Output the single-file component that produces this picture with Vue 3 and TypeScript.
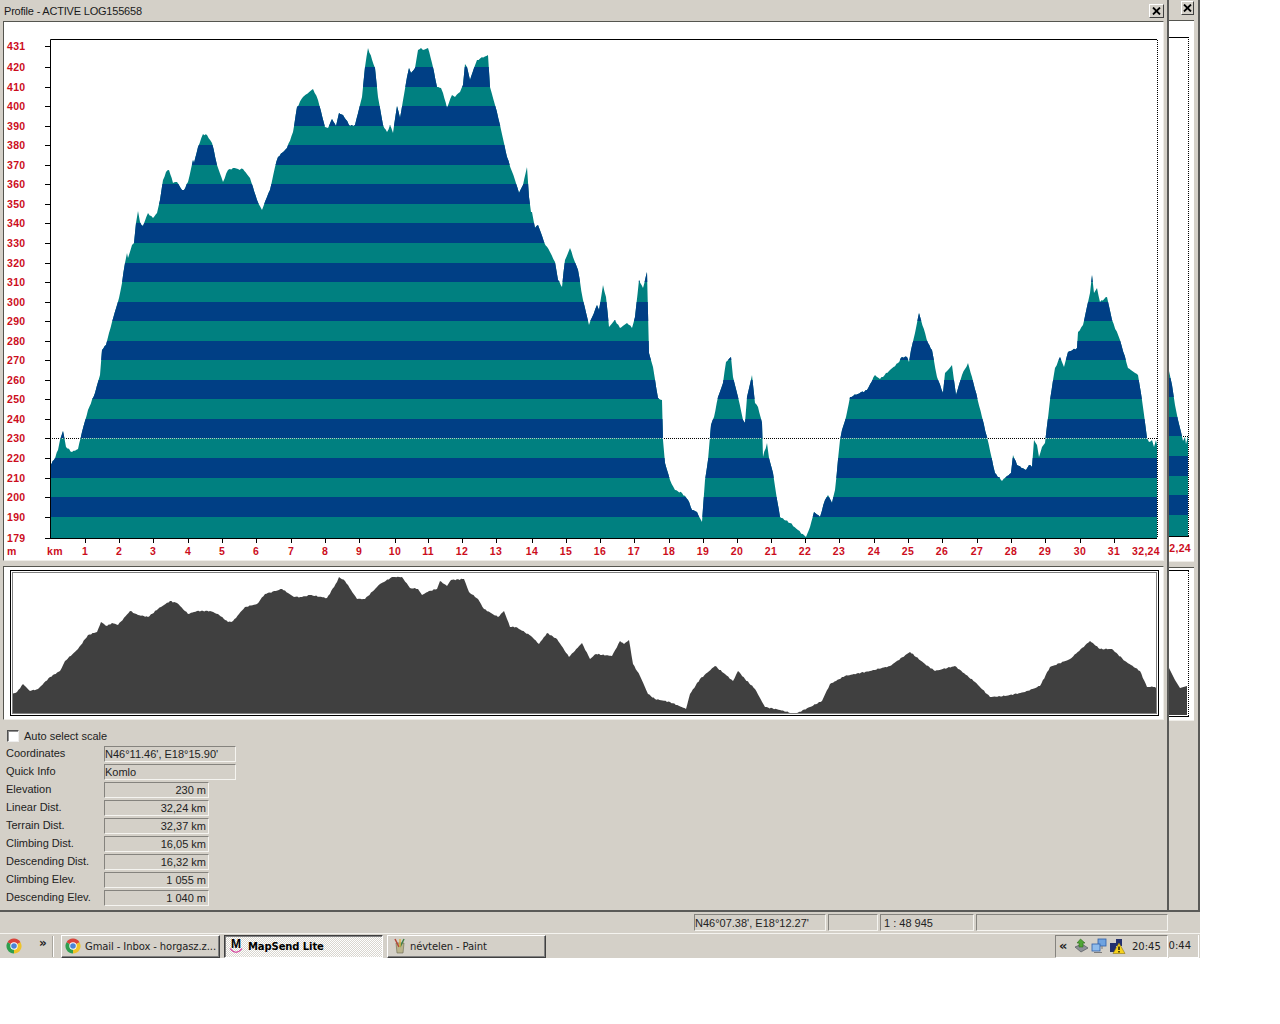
<script setup lang="ts">
type Pt = [number, number]

// traced by hand from the profile, x/y are page pixels
const mainTrace: Pt[] = [
  [50,465],[54,460],[58,450],[60,440],[63,431],[66,447],[72,452],[78,449],[82,432],[88,410],[95,393],[100,375],[102,350],[106,345],[112,322],[119,298],
  [122,283],[125,263],[127,253],[128,258],[132,245],[134,243],[136,223],[138,211],[140,222],[143,226],[148,213],[153,218],[157,213],[160,200],[163,180],[166,172],[169,170],[173,183],[177,182],[182,190],[184,190],[188,182],[193,160],[194,163],[198,147],[203,134],[207,135],[212,143],[217,165],[223,182],[228,170],[233,168],[238,169],[243,169],[250,178],[257,200],[262,210],[267,197],[270,190],[275,167],[278,157],[287,148],[293,132],[297,107],[303,97],[313,89],[318,100],[325,127],[328,128],[332,119],[336,126],[339,113],[343,115],[350,126],[355,125],[362,97],[365,67],[368,48],[375,68],[378,97],[383,125],[387,132],[390,125],[393,133],[397,106],
  [400,118],[407,77],[409,68],[411,73],[415,68],[418,50],[421,48],[423,50],[428,48],[432,63],[437,87],[441,88],[443,93],[447,108],[452,95],[455,97],[460,92],[463,85],[465,64],[467,67],[470,80],[474,68],[477,60],[488,55],[490,87],[495,105],[500,125],[507,157],[515,180],[519,193],[523,185],[527,167],[529,197],[531,212],[532,212],[535,228],[538,225],[541,233],[544,242],[550,252],[555,262],[558,280],[562,287],[565,260],[570,248],[573,257],[578,270],[583,300],[589,325],[597,305],[599,310],[603,285],[606,297],[609,327],[615,320],[620,328],[627,323],[632,328],[635,317],[639,280],[643,288],[647,272],[649,353],
  [653,367],[658,398],[662,400],[663,440],[665,463],[670,480],[675,490],[682,493],[688,500],[692,510],[697,512],[702,522],[705,480],[708,460],[711,425],[714,417],[718,397],[723,383],[726,362],[731,357],[733,377],[738,397],[743,420],[745,423],[747,397],[752,375],[755,403],[758,407],[762,423],[763,457],[767,443],[769,458],[773,473],[776,493],[780,517],[790,523],[798,530],[806,537],[810,527],[814,512],[820,517],[825,500],[828,495],[832,503],[835,490],[840,440],[842,430],[846,417],[850,397],[867,390],[875,375],[880,379],[898,363],[902,357],[907,357],[909,362],[911,350],[915,333],[919,313],
  [921,320],[928,343],[932,350],[937,377],[943,393],[945,373],[948,370],[952,365],[956,395],[962,375],[968,363],[972,377],[982,417],[987,437],[995,473],[1002,481],[1007,476],[1011,473],[1013,455],[1017,465],[1026,470],[1029,465],[1032,467],[1034,440],[1037,445],[1039,457],[1042,447],[1045,443],[1050,400],[1055,368],[1060,357],[1064,367],[1068,352],[1077,348],[1078,332],[1083,325],[1090,293],[1092,275],[1094,293],[1097,288],[1100,302],[1107,297],[1112,320],[1120,340],[1128,368],[1138,375],[1142,400],[1147,438],[1149,442],[1152,440],[1154,447],[1156,440],[1157,445]
]

const overviewTrace: Pt[] = [
  [12,695],[17,693],[23,685],[30,692],[38,690],[50,678],[60,672],[65,662],[78,650],[88,636],[97,633],[101,623],[107,627],[112,624],[118,626],[130,612],[138,616],[148,618],[158,610],[170,602],[177,604],[188,615],[197,612],[210,612],[218,615],[228,623],[233,622],[245,608],[257,605],[265,595],[282,590],[294,598],[302,598],[310,596],[327,599],[337,583],[339,578],[345,582],[357,600],[365,600],[380,585],[384,583],[392,578],[402,578],[410,589],[418,590],[422,596],[429,592],[437,590],[440,582],[447,587],[451,581],[464,580],[469,593],[478,600],[484,610],[498,618],[504,612],[510,628],[516,628],[531,637],[539,645],[547,634],[557,640],[569,658],[582,644],[590,660],[596,655],[612,657],[620,642],[624,645],[629,641],[633,665],[640,677],[648,695],[655,700],[670,703],[686,710],[690,695],[700,680],[715,667],[725,675],[733,682],[738,672],[745,680],[755,690],[765,708],[780,711],[795,715],[810,708],[822,702],[830,685],[845,677],[870,672],[890,667],[910,653],[925,665],[935,672],[955,667],[975,683],[990,698],[1005,697],[1025,693],[1040,687],[1050,668],[1070,660],[1090,642],[1100,650],[1112,650],[1125,662],[1140,672],[1147,688],[1155,688],[1157,690]
]

// adds the small per-pixel roughness of the original plot
function rough(points: Pt[], amount: number): string {
  const out: string[] = []
  for (let i = 0; i < points.length - 1; i++) {
    const [x0, y0] = points[i]
    const [x1, y1] = points[i + 1]
    const steps = Math.max(1, Math.round((x1 - x0) / 1.5))
    for (let s = 0; s < steps; s++) {
      const x = x0 + ((x1 - x0) * s) / steps
      const noise = s === 0 ? 0 : Math.sin(x * 2.3) * Math.sin(x * 0.7) * amount
      out.push(`${x.toFixed(1)},${(y0 + ((y1 - y0) * s) / steps + noise).toFixed(1)}`)
    }
  }
  const last = points[points.length - 1]
  out.push(`${last[0]},${last[1]}`)
  return out.join(' ')
}

const elevY = (e: number) => Math.round(67 + (420 - e) * 1.955)

const mainPoints = `50,538 ${rough(mainTrace, 0.9)} 1157,538`
const overviewPoints = `12,715 ${rough(overviewTrace, 0.6)} 1157,715`
const backPoints = '1169,371 1172,385 1175,405 1178,420 1181,432 1183,441 1185,437 1186,444 1188,436 1188,536 1169,536'
const backOverview = '1169,668 1175,680 1180,688 1187,686 1187,715 1169,715'

const bands = [420, 400, 380, 360, 340, 320, 300, 280, 260, 240, 220, 200].map((e) => ({
  y: elevY(e),
  h: elevY(e - 10) - elevY(e)
}))

const elevLabels = [
  { text: '431', y: 46 },
  ...Array.from({ length: 24 }, (_, i) => ({ text: String(420 - i * 10), y: elevY(420 - i * 10) })),
  { text: '179', y: 538 }
]

const kmX = [85, 119, 153, 188, 222, 256, 291, 325, 359, 395, 428, 462, 496, 532, 566, 600, 634, 669, 703, 737, 771, 805, 839, 874, 908, 942, 977, 1011, 1045, 1080, 1114]

const wideFields = [
  { label: 'Coordinates', value: "N46°11.46', E18°15.90'" },
  { label: 'Quick Info', value: 'Komlo' }
]
const numberFields = [
  { label: 'Elevation', value: '230 m' },
  { label: 'Linear Dist.', value: '32,24 km' },
  { label: 'Terrain Dist.', value: '32,37 km' },
  { label: 'Climbing Dist.', value: '16,05 km' },
  { label: 'Descending Dist.', value: '16,32 km' },
  { label: 'Climbing Elev.', value: '1 055 m' },
  { label: 'Descending Elev.', value: '1 040 m' }
]
</script>

<template>
  <div class="screen">
    <div class="windows">
      <div class="window main-window">
        <div class="title-bar">
          <span class="title-text">Profile - ACTIVE LOG155658</span>
          <button class="close-btn">
            <svg width="9" height="8" viewBox="0 0 9 8"><path d="M1 0.5L8 7.5M8 0.5L1 7.5" stroke="#000" stroke-width="1.8" /></svg>
          </button>
        </div>

        <div class="panel chart-panel">
          <svg class="plot" width="1159" height="538" viewBox="4 22 1159 538">
            <defs>
              <clipPath id="main-clip"><polygon :points="mainPoints" /></clipPath>
            </defs>
            <line x1="50" y1="438.5" x2="1157" y2="438.5" stroke="#000" stroke-dasharray="1 1" />
            <g clip-path="url(#main-clip)">
              <rect x="50" y="40" width="1107" height="498" fill="#008080" />
              <rect v-for="b in bands" :key="b.y" x="50" :y="b.y" width="1107" :height="b.h" fill="#003f85" />
              <line x1="50" y1="438.5" x2="1157" y2="438.5" stroke="#b8c4c4" stroke-dasharray="1 1" />
            </g>
            <path d="M50.5 538V39.5H1157" fill="none" stroke="#000" />
            <path d="M50 538.5H1157" stroke="#000" />
            <line x1="1157.5" y1="40" x2="1157.5" y2="538" stroke="#000" stroke-dasharray="1 1" />
            <g v-for="l in elevLabels" :key="l.text">
              <line x1="45" :y1="l.y + 0.5" x2="50" :y2="l.y + 0.5" stroke="#000" />
              <text class="axis" x="7" :y="l.y + 4">{{ l.text }}</text>
            </g>
            <text class="axis" x="7" y="555">m</text>
            <text class="axis" x="47" y="555">km</text>
            <g v-for="(x, i) in kmX" :key="x">
              <line :x1="x + 0.5" y1="538" :x2="x + 0.5" y2="543" stroke="#000" />
              <text class="axis" :x="x" y="555" text-anchor="middle">{{ i + 1 }}</text>
            </g>
            <text class="axis" x="1146" y="555" text-anchor="middle">32,24</text>
          </svg>
        </div>

        <div class="panel overview-panel">
          <svg class="plot" width="1159" height="152" viewBox="4 568 1159 152">
            <polygon :points="overviewPoints" fill="#404040" />
            <rect x="10.5" y="571.5" width="1148" height="145" fill="none" stroke="#000" />
            <rect x="12.5" y="573.5" width="1144" height="141" fill="none" stroke="#fff" />
            <rect x="12.5" y="573.5" width="1144" height="141" fill="none" stroke="#000" stroke-dasharray="1 1" />
          </svg>
        </div>

        <div class="info-panel">
          <label class="auto-scale">
            <span class="check-box"></span>
            <span>Auto select scale</span>
          </label>
          <div v-for="f in wideFields" :key="f.label" class="info-row">
            <span class="info-label">{{ f.label }}</span>
            <span class="field field-wide">{{ f.value }}</span>
          </div>
          <div v-for="f in numberFields" :key="f.label" class="info-row">
            <span class="info-label">{{ f.label }}</span>
            <span class="field field-number">{{ f.value }}</span>
          </div>
        </div>
      </div>

      <div class="window back-window">
        <div class="title-bar back-title">
          <button class="close-btn">
            <svg width="9" height="8" viewBox="0 0 9 8"><path d="M1 0.5L8 7.5M8 0.5L1 7.5" stroke="#000" stroke-width="1.8" /></svg>
          </button>
        </div>
        <div class="back-panel back-chart">
          <svg class="plot" width="25" height="540" viewBox="1169 21 25 540">
            <defs>
              <clipPath id="back-clip"><polygon :points="backPoints" /></clipPath>
            </defs>
            <line x1="1169" y1="436.5" x2="1188" y2="436.5" stroke="#000" stroke-dasharray="1 1" />
            <g clip-path="url(#back-clip)">
              <rect x="1169" y="37" width="19" height="499" fill="#008080" />
              <rect v-for="b in bands" :key="b.y" x="1169" :y="b.y - 2" width="19" :height="b.h" fill="#003f85" />
            </g>
            <path d="M1169 37.5H1188" stroke="#000" />
            <path d="M1169 536.5H1189" stroke="#000" />
            <line x1="1188.5" y1="37" x2="1188.5" y2="536" stroke="#000" stroke-dasharray="1 1" />
            <text class="axis" x="1191" y="552" text-anchor="end">2,24</text>
          </svg>
        </div>
        <div class="back-panel back-overview">
          <svg class="plot" width="25" height="152" viewBox="1169 568 25 152">
            <polygon :points="backOverview" fill="#404040" />
            <path d="M1169 570.5H1189M1169 716.5H1189" stroke="#000" />
            <line x1="1188.5" y1="571" x2="1188.5" y2="716" stroke="#000" stroke-dasharray="1 1" />
          </svg>
        </div>
      </div>
    </div>

    <div class="status-bar">
      <span class="status-pane pane-coords">N46°07.38', E18°12.27'</span>
      <span class="status-pane pane-empty"></span>
      <span class="status-pane pane-scale">1 : 48 945</span>
      <span class="status-pane pane-rest"></span>
    </div>

    <div class="taskbar">
      <div class="tray-area">
        <svg class="chrome-quick" width="16" height="16" viewBox="0 0 16 16">
          <path d="M8 8L1.5 4.25A7.5 7.5 0 0 1 14.5 4.25Z" fill="#d9433a" />
          <path d="M8 8L14.5 4.25A7.5 7.5 0 0 1 8 15.5Z" fill="#eec32a" />
          <path d="M8 8L8 15.5A7.5 7.5 0 0 1 1.5 4.25Z" fill="#2f9e4f" />
          <circle cx="8" cy="8" r="3.7" fill="#fff" /><circle cx="8" cy="8" r="2.8" fill="#4a84d8" />
        </svg>
        <span class="more">»</span>
        <span class="divider"></span>

        <div class="task-btn">
          <svg width="16" height="16" viewBox="0 0 16 16">
            <path d="M8 8L1.5 4.25A7.5 7.5 0 0 1 14.5 4.25Z" fill="#d9433a" />
            <path d="M8 8L14.5 4.25A7.5 7.5 0 0 1 8 15.5Z" fill="#eec32a" />
            <path d="M8 8L8 15.5A7.5 7.5 0 0 1 1.5 4.25Z" fill="#2f9e4f" />
            <circle cx="8" cy="8" r="3.7" fill="#fff" /><circle cx="8" cy="8" r="2.8" fill="#4a84d8" />
          </svg>
          <span class="task-label">Gmail - Inbox - horgasz.z...</span>
        </div>
        <div class="task-btn task-active">
          <span class="mapsend-icon">
            <span class="mapsend-m">M</span>
            <svg width="16" height="16" viewBox="0 0 16 16"><path d="M2 10.5Q8 18 14 10.5" fill="none" stroke="#d6379a" stroke-width="1.2" /></svg>
          </span>
          <span class="task-label">MapSend Lite</span>
        </div>
        <div class="task-btn task-paint">
          <svg width="16" height="16" viewBox="0 0 16 16">
            <path d="M4 5L12 5L11 15H5Z" fill="#b9b48c" stroke="#6a6650" stroke-width=".6" />
            <path d="M3 1L7 9" stroke="#b5483a" stroke-width="1.6" />
            <path d="M12 1L8 9" stroke="#3f7f4a" stroke-width="1.6" />
            <path d="M8 1V9" stroke="#d8b23a" stroke-width="1.4" />
          </svg>
          <span class="task-label">névtelen - Paint</span>
        </div>
      </div>

      <div class="tray">
        <span class="tray-more">«</span>
        <svg width="16" height="16" viewBox="0 0 16 16">
          <path d="M2 9L9 6L15 10L8 14Z" fill="#8d9198" stroke="#55585e" stroke-width=".7" />
          <path d="M4 5L7.5 1L12 5H10V9H6V5Z" fill="#4fa636" stroke="#2f6b1f" stroke-width=".6" />
        </svg>
        <svg width="16" height="16" viewBox="0 0 16 16">
          <rect x="7" y="1" width="8" height="7" fill="#6fa3e0" stroke="#2f5ea8" stroke-width=".8" />
          <rect x="1" y="6" width="8" height="7" fill="#8fbcec" stroke="#2f5ea8" stroke-width=".8" />
          <path d="M3 14.5H11M11 8V11" stroke="#7a7a7a" />
        </svg>
        <svg width="17" height="16" viewBox="0 0 17 16">
          <rect x="1" y="5" width="6" height="9" fill="#23306e" />
          <rect x="7" y="1" width="6" height="7" fill="#23306e" />
          <path d="M10 5L16 15.5H4Z" fill="#f6d21c" stroke="#8b7410" stroke-width=".6" />
          <path d="M10 8.5V12M10 13V14.5" stroke="#000" stroke-width="1.3" />
        </svg>
        <span class="clock">20:45</span>
      </div>
      <div class="back-clock"><span>0:44</span></div>
    </div>
  </div>
</template>

<style scoped>
.screen {
  width: 1200px;
  height: 1024px;
  font-family: "Liberation Sans", Arial, sans-serif;
  font-size: 11px;
  color: #222;
}
.windows {
  display: flex;
  height: 912px;
}
.window {
  background: #d4d0c8;
  box-sizing: border-box;
  border-right: 2px solid #5a5a58;
  border-bottom: 2px solid #5a5a58;
}
.main-window {
  width: 1169px;
  padding: 0 3px 0 3px;
}
.back-window {
  width: 31px;
}
.title-bar {
  height: 21px;
  display: flex;
  align-items: center;
  justify-content: space-between;
}
.title-text {
  padding-left: 1px;
  color: #1a1a1a;
  letter-spacing: -0.2px;
}
.close-btn {
  width: 15px;
  height: 14px;
  margin-right: 0;
  padding: 0;
  display: flex;
  align-items: center;
  justify-content: center;
  background: #d4d0c8;
  box-sizing: border-box;
  border: 1px solid;
  border-color: #fff #404040 #404040 #fff;
}
.back-title {
  height: 19px;
  align-items: flex-start;
  padding: 1px 4px 0 12px;
}
.panel {
  background: #fff;
  border: 1px solid;
  border-color: #55554f #efede8 #efede8 #55554f;
}
.plot {
  display: block;
}
.chart-panel {
  height: 538px;
}
.overview-panel {
  height: 152px;
  margin-top: 5px;
}
.axis {
  font-family: "Liberation Sans", Arial, sans-serif;
  font-size: 10.5px;
  font-weight: bold;
  letter-spacing: 0.3px;
  fill: #cc0d1c;
}
.info-panel {
  padding: 8px 0 0 3px;
  display: flex;
  flex-direction: column;
  gap: 2px;
}
.auto-scale {
  display: flex;
  align-items: center;
  gap: 5px;
  height: 15px;
  margin: 0 0 1px 1px;
}
.check-box {
  width: 12px;
  height: 12px;
  box-sizing: border-box;
  background: #fff;
  border: 1px solid;
  border-color: #505050 #eee #eee #505050;
  box-shadow: inset 1px 1px 0 #909090;
}
.info-row {
  display: flex;
  align-items: flex-start;
  height: 16px;
}
.info-label {
  width: 98px;
  line-height: 14px;
}
.field {
  height: 16px;
  line-height: 15px;
  box-sizing: border-box;
  border: 1px solid;
  border-color: #85837e #f5f4f0 #f5f4f0 #85837e;
  white-space: nowrap;
}
.field-wide {
  width: 132px;
}
.field-number {
  width: 105px;
  text-align: right;
  padding-right: 2px;
}
.status-bar {
  height: 21px;
  background: #d4d0c8;
  box-sizing: border-box;
  display: flex;
  gap: 2px;
  padding: 2px 32px 2px 694px;
}
.status-pane {
  box-sizing: border-box;
  height: 17px;
  line-height: 16px;
  border: 1px solid;
  border-color: #85837e #f5f4f0 #f5f4f0 #85837e;
  white-space: nowrap;
}
.pane-coords { width: 132px; }
.pane-empty { width: 50px; }
.pane-scale { width: 94px; padding-left: 3px; }
.pane-rest { flex: 1; }
.taskbar {
  height: 25px;
  background: #d4d0c8;
  border-top: 1px solid #f4f3ef;
  display: flex;
  align-items: center;
  box-sizing: border-box;
  font-family: "DejaVu Sans", sans-serif;
  font-size: 10px;
}
.tray-area {
  display: flex;
  align-items: center;
  flex: 1;
  height: 100%;
}
.chrome-quick {
  margin-left: 6px;
}
.more {
  width: 10px;
  margin-left: 17px;
  margin-top: -7px;
  font-weight: bold;
  font-size: 12px;
}
.divider {
  width: 1px;
  height: 21px;
  margin: 0 7px 0 3px;
  background: #a9a69e;
  border-right: 1px solid #fff;
}
.task-btn {
  width: 159px;
  height: 23px;
  margin-right: 4px;
  box-sizing: border-box;
  display: flex;
  align-items: center;
  gap: 4px;
  padding-left: 3px;
  border: 1px solid;
  border-color: #fff #404040 #404040 #fff;
  box-shadow: inset -1px -1px 0 #808080;
  white-space: nowrap;
  overflow: hidden;
}
.task-paint {
  gap: 2px;
  padding-left: 4px;
}
.task-label {
  letter-spacing: -0.1px;
}
.task-active {
  border-color: #404040 #fff #fff #404040;
  box-shadow: inset 1px 1px 0 #808080;
  background: repeating-conic-gradient(#fff 0 25%, #d9d6cf 0 50%) 0 0 / 2px 2px;
  font-weight: bold;
  color: #000;
}
.mapsend-icon {
  width: 16px;
  height: 16px;
  display: grid;
  flex: none;
}
.mapsend-icon > * {
  grid-area: 1 / 1;
}
.mapsend-m {
  font-family: "Liberation Sans", sans-serif;
  font-size: 12px;
  font-weight: bold;
  line-height: 13px;
  text-align: center;
  color: #000;
}
.tray {
  width: 113px;
  height: 23px;
  margin-right: 1px;
  box-sizing: border-box;
  display: flex;
  align-items: center;
  gap: 2px;
  padding-left: 3px;
  border: 1px solid;
  border-color: #85837e #fff #fff #85837e;
}
.tray-more {
  width: 12px;
  font-weight: bold;
  font-size: 13px;
  margin-top: -2px;
}
.clock {
  margin-left: 4px;
}
.back-clock {
  width: 30px;
  height: 23px;
  margin-right: 1px;
  box-sizing: border-box;
  display: flex;
  align-items: center;
  justify-content: flex-end;
  padding-right: 7px;
  border-right: 1px solid #fff;
  border-bottom: 1px solid #fff;
}
.back-panel {
  background: #fff;
  width: 25px;
  box-sizing: border-box;
}
.back-chart {
  height: 542px;
  border-top: 1px solid #55554f;
  border-bottom: 1px solid #efede8;
}
.back-overview {
  height: 154px;
  margin-top: 5px;
  border-top: 1px solid #55554f;
  border-bottom: 1px solid #efede8;
}
</style>

<style>
html, body {
  background: #fff;
}
</style>
